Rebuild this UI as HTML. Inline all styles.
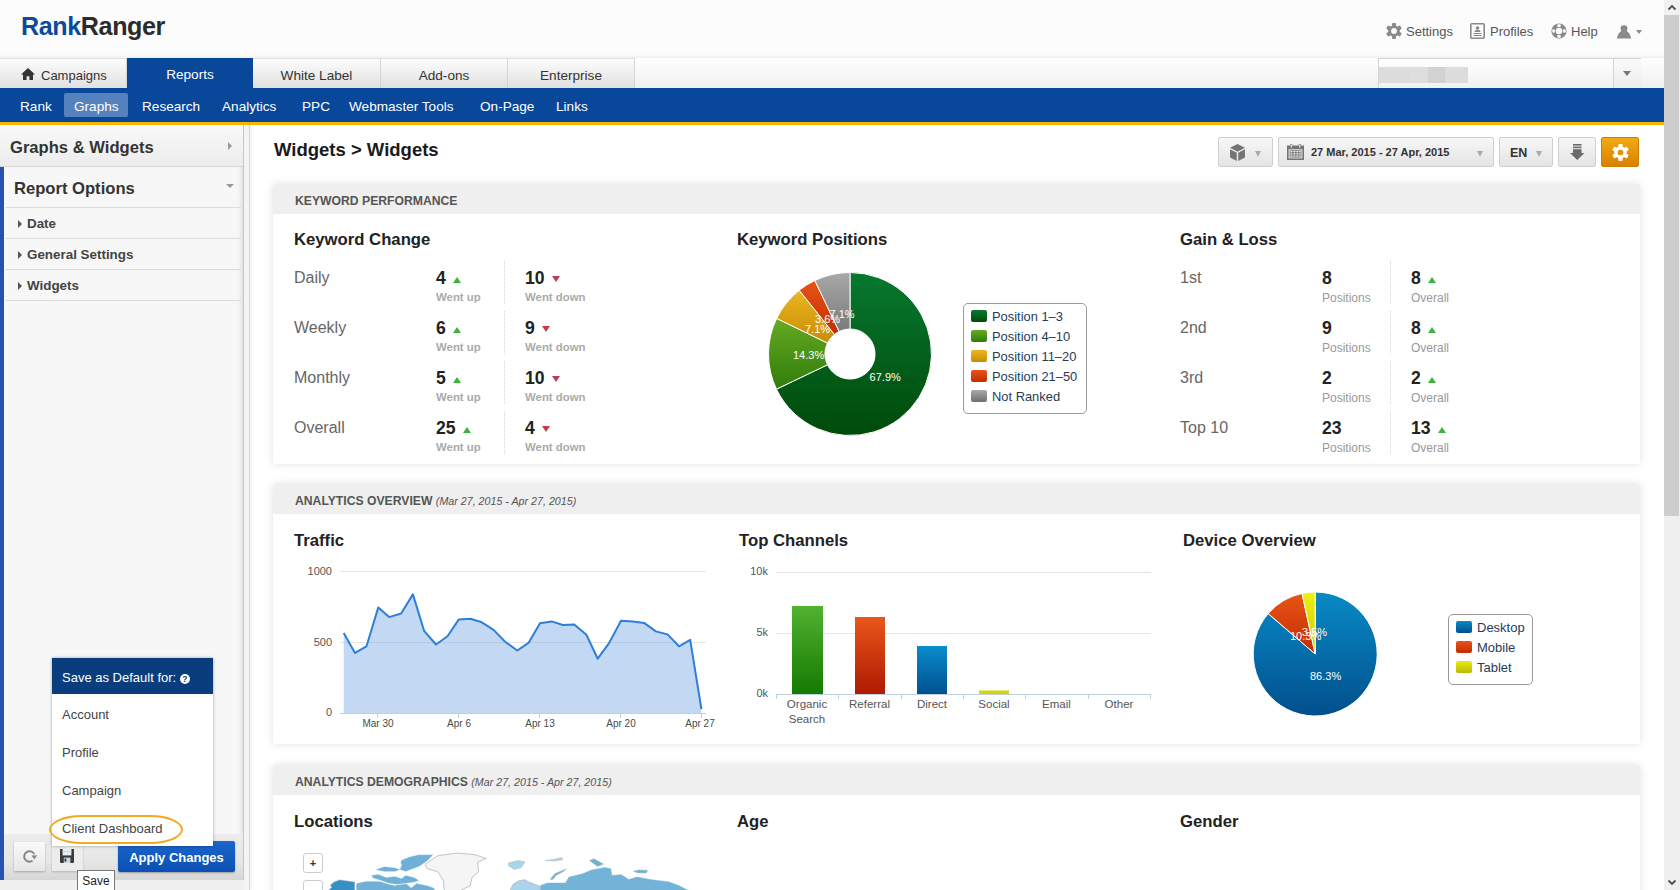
<!DOCTYPE html>
<html><head><meta charset="utf-8">
<style>
*{box-sizing:border-box;margin:0;padding:0}
html,body{width:1680px;height:890px;overflow:hidden;background:#fff;font-family:"Liberation Sans",sans-serif;color:#333}
.abs{position:absolute}
#hdr{position:absolute;left:0;top:0;width:1664px;height:58px;background:#fcfcfc}
#logo{position:absolute;left:21px;top:12px;font-size:25px;font-weight:bold;letter-spacing:-0.4px;transform:scaleX(1.005);transform-origin:0 0}
#logo .a{color:#0b4a9c}#logo .b{color:#2b2b2b}
.tl{position:absolute;top:24px;font-size:13px;color:#555}
#tabs{position:absolute;left:0;top:58px;width:1664px;height:30px;background:linear-gradient(#fff,#f0f0f0);box-shadow:0 -1px 3px rgba(0,0,0,.08)}
.tab{position:absolute;top:0;height:30px;line-height:33px;text-align:center;font-size:13.6px;color:#333;border-right:1px solid #d4d4d4;border-top:1px solid #e2e2e2;background:linear-gradient(#fdfdfd,#e0e0e0)}
.tab.act{background:#08479a;color:#fff;border-right:none}
#nav{position:absolute;left:0;top:88px;width:1664px;height:34px;background:#08479a}
#nav span{position:absolute;top:0;line-height:38px;font-size:13.6px;color:#fff}
#orl{position:absolute;left:0;top:122px;width:1664px;height:3px;background:#f7b500}
#side{position:absolute;left:0;top:125px;width:244px;height:755px;border-bottom-left-radius:4px;background:#f7f7f7;border-right:1px solid #c6c6c6;box-shadow:inset -5px 0 4px -3px rgba(0,0,0,.10)}
#strip{position:absolute;left:244px;top:125px;width:6px;height:765px;background:#f4f4f4;border-right:1px solid #d6d6d6;box-shadow:2px 0 3px rgba(0,0,0,.05)}
#scroll{position:absolute;left:1664px;top:0;width:16px;height:890px;background:#f0f0f0}
#thumb{position:absolute;left:1664px;top:15px;width:15px;height:501px;background:#cdcdcd}
.card{position:absolute;left:273px;width:1367px;background:#fff;box-shadow:0 0 8px rgba(0,0,0,.12);border-radius:3px 3px 0 0}
.card .ch{height:30px;background:#efefef;font-size:12.2px;color:#555;font-weight:bold;line-height:34px;padding-left:22px;border-radius:3px 3px 0 0}
.card .ch i{font-weight:normal;font-size:10.7px}
.si{position:absolute;left:27px;font-size:13.4px;font-weight:bold;color:#444;margin-top:1px}
.si:before{content:"";position:absolute;left:-9px;top:4px;border-top:4px solid transparent;border-bottom:4px solid transparent;border-left:4px solid #555}
.pi{position:absolute;left:10px;font-size:13px;color:#444;margin-top:1px}
.tb{position:absolute;top:137px;height:30px;background:linear-gradient(#f7f7f7,#e4e4e4);border:1px solid #cfcfcf;border-radius:2px}
.car{position:absolute;top:13px;width:0;height:0;border-left:3.5px solid transparent;border-right:3.5px solid transparent;border-top:6px solid #aaa}
.rl{position:absolute;font-size:16px;color:#666;margin-top:1px}
.rn{position:absolute;font-size:17.6px;font-weight:bold;color:#222;white-space:nowrap;margin-top:-0.5px}
.rs{position:absolute;font-size:11.4px;font-weight:bold;color:#aaa;white-space:nowrap;margin-top:4px}
.rs.n{font-weight:normal;font-size:12px;color:#999}
.tu{display:inline-block;margin-left:7px;vertical-align:1px;border-left:4px solid transparent;border-right:4px solid transparent;border-bottom:6.5px solid #3cb43c}
.td{display:inline-block;margin-left:7.5px;vertical-align:2px;border-left:4px solid transparent;border-right:4px solid transparent;border-top:6px solid #c23a55}
.sep{position:absolute;width:0;height:43px;margin-top:3px;border-left:1px dotted #d5d5d5}
.lg{position:absolute;width:16px;height:12px;border-radius:2px}
.lt{position:absolute;font-size:12.9px;color:#283c55;white-space:nowrap;margin-top:1px}
.h3{position:absolute;font-size:16.7px;font-weight:bold;color:#222;white-space:nowrap}
</style></head><body>
<div id="hdr">
  <div id="logo"><span class="a">Rank</span><span class="b">Ranger</span></div>
  <svg class="abs" style="left:1386px;top:23px" width="16" height="16" viewBox="0 0 16 16"><g fill="#8a8a8a"><circle cx="8" cy="8" r="5.8"/><g id="tth"><rect x="6" y="0" width="4" height="3.5" rx="1"/><rect x="6" y="12.5" width="4" height="3.5" rx="1"/></g><use href="#tth" transform="rotate(60 8 8)"/><use href="#tth" transform="rotate(120 8 8)"/></g><circle cx="8" cy="8" r="2.9" fill="#fcfcfc"/></svg>
  <div class="tl" style="left:1406px">Settings</div>
  <svg class="abs" style="left:1470px;top:23px" width="15" height="16" viewBox="0 0 15 16"><rect x="0.8" y="0.8" width="13.4" height="14.4" rx="1" fill="none" stroke="#8a8a8a" stroke-width="1.6"/><circle cx="7.5" cy="5" r="1.8" fill="#8a8a8a"/><path d="M4.5 9c0-1.5 1.3-2.2 3-2.2s3 .7 3 2.2z" fill="#8a8a8a"/><rect x="3.5" y="10" width="8" height="1" fill="#8a8a8a"/><rect x="3.5" y="12" width="8" height="1" fill="#8a8a8a"/></svg>
  <div class="tl" style="left:1490px">Profiles</div>
  <svg class="abs" style="left:1551px;top:23px" width="16" height="16" viewBox="0 0 16 16"><circle cx="8" cy="8" r="7.6" fill="#8a8a8a"/><circle cx="8" cy="8" r="3.3" fill="#fcfcfc"/><g fill="#fcfcfc"><rect x="6.2" y="1.3" width="3.6" height="2.6" rx="1"/><rect x="6.2" y="12.1" width="3.6" height="2.6" rx="1"/><rect x="1.3" y="6.2" width="2.6" height="3.6" rx="1"/><rect x="12.1" y="6.2" width="2.6" height="3.6" rx="1"/></g></svg>
  <div class="tl" style="left:1571px">Help</div>
  <svg class="abs" style="left:1617px;top:25px" width="26" height="14" viewBox="0 0 26 14"><circle cx="7" cy="3.6" r="3.4" fill="#8a8a8a"/><path d="M7 5.5c-3.5 0-6.5 3-7 8h14c-.5-5-3.5-8-7-8z" fill="#8a8a8a"/><path d="M19 5h6l-3 4z" fill="#8a8a8a"/></svg>
</div>
<div id="tabs">
  <div class="tab" style="left:0;width:127px;text-align:left;padding-left:41px;font-size:13px"><svg style="position:absolute;left:21px;top:9px" width="14" height="12" viewBox="0 0 14 12"><path d="M7 0L0 6.5h2V12h3.6V8.3h2.8V12H12V6.5h2z" fill="#333"/></svg>Campaigns</div>
  <div class="tab act" style="left:127px;width:126px;border-top:none">Reports</div>
  <div class="tab" style="left:253px;width:128px">White Label</div>
  <div class="tab" style="left:381px;width:127px">Add-ons</div>
  <div class="tab" style="left:508px;width:127px">Enterprise</div>
  <div class="abs" style="left:1378px;top:0;width:263px;height:30px;background:linear-gradient(#fff,#f1f1f1);border:1px solid #d4d4d4;border-bottom:none">
    <div class="abs" style="left:0;top:8px;width:89px;height:16px;background:linear-gradient(90deg,#dcdcdc 0,#dcdcdc 35%,#dedede 35%,#dedede 55%,#d2d2d2 55%,#d2d2d2 74%,#dcdcdc 74%)"></div>
    <div class="abs" style="left:234px;top:0;width:28px;height:30px;border-left:1px solid #d4d4d4;background:linear-gradient(#fafafa,#ececec)"><div class="abs" style="left:9px;top:12px;width:0;height:0;border-left:4.5px solid transparent;border-right:4.5px solid transparent;border-top:5px solid #777"></div></div>
  </div>
</div>
<div id="nav">
  <div class="abs" style="left:64px;top:5px;width:64px;height:24px;background:#5582bd;border-radius:2px"></div>
  <span style="left:20px">Rank</span>
  <span style="left:74px">Graphs</span>
  <span style="left:142px">Research</span>
  <span style="left:222px">Analytics</span>
  <span style="left:302px">PPC</span>
  <span style="left:349px">Webmaster Tools</span>
  <span style="left:480px">On-Page</span>
  <span style="left:556px">Links</span>
</div>
<div id="orl"></div>
<div id="side">
  <div class="abs" style="left:0;top:0;width:243px;height:42px;background:linear-gradient(#f9f9f9,#ececec);border-bottom:1px solid #d6d6d6"></div>
  <div class="abs" style="left:10px;top:12.5px;font-size:16.6px;font-weight:bold;color:#333">Graphs &amp; Widgets</div>
  <div class="abs" style="left:228px;top:17px;width:0;height:0;border-top:4px solid transparent;border-bottom:4px solid transparent;border-left:4.5px solid #999"></div>
  <div class="abs" style="left:0;top:42px;width:4px;height:713px;background:#2852b0"></div>
  <div class="abs" style="left:14px;top:53.5px;font-size:16.6px;font-weight:bold;color:#333">Report Options</div>
  <div class="abs" style="left:226px;top:59px;width:0;height:0;border-left:4px solid transparent;border-right:4px solid transparent;border-top:4.5px solid #999"></div>
  <div class="abs" style="left:6px;top:82px;width:235px;height:1px;background:#dcdcdc"></div>
  <div class="abs" style="left:6px;top:113px;width:235px;height:1px;background:#dcdcdc"></div>
  <div class="abs" style="left:6px;top:144px;width:235px;height:1px;background:#dcdcdc"></div>
  <div class="abs" style="left:6px;top:175px;width:235px;height:1px;background:#dcdcdc"></div>
  <div class="si" style="top:90px">Date</div>
  <div class="si" style="top:121px">General Settings</div>
  <div class="si" style="top:152px">Widgets</div>
  <div class="abs" style="left:4px;top:709px;width:239px;height:46px;background:linear-gradient(#ececec,#e6e6e6 60%,#d6d6d6)"></div>
  <div class="abs" style="left:14px;top:717px;width:31px;height:29px;background:linear-gradient(#fafafa,#e6e6e6);box-shadow:0 1px 2px rgba(0,0,0,.25)"><svg class="abs" style="left:8px;top:7px" width="15" height="15" viewBox="0 0 15 15"><path d="M10.54 11.84A5.3 5.3 0 1 1 12.18 5.01" fill="none" stroke="#858585" stroke-width="1.9"/><path d="M9.4 6.4L15 6.2 12.4 10.4z" fill="#858585"/></svg></div>
  <div class="abs" style="left:52px;top:720px;width:31px;height:26px;background:#ececec;box-shadow:0 1px 2px rgba(0,0,0,.2)"><svg class="abs" style="left:8px;top:4px" width="14" height="14" viewBox="0 0 14 14"><path d="M0 0H14V13Q14 14 13 14H1Q0 14 0 13z" fill="#3b3b3b"/><rect x="2.6" y="0" width="8.8" height="6.4" fill="#e6eef6"/><rect x="2.6" y="2" width="8.8" height="1" fill="#c8d4e0"/><rect x="3.8" y="8.6" width="6.6" height="5.4" fill="#d6d6d6"/><rect x="4.6" y="9.6" width="1.6" height="3" fill="#2a2a2a"/></svg></div>
  <div class="abs" style="left:118px;top:716px;width:117px;height:31px;background:linear-gradient(#1b66cc,#0a4fb3);border-radius:2px;box-shadow:0 1px 2px rgba(0,0,0,.3);color:#fff;font-size:13px;font-weight:bold;line-height:33px;text-align:center">Apply Changes</div>
</div>
<div class="abs" style="left:0;top:880px;width:244px;height:10px;background:#f0f0f0"></div>
<div id="strip"></div>
<div class="abs" style="left:52px;top:658px;width:161px;height:188px;background:#fff;box-shadow:0 0 3px rgba(0,0,0,.35)">
  <div class="abs" style="left:0;top:0;width:161px;height:36px;background:#0a3d7e;color:#fff;font-size:13px;line-height:39px;padding-left:10px">Save as Default for: <span style="display:inline-block;width:10px;height:10px;border-radius:50%;background:#fff;color:#0a3d7e;font-size:8.5px;font-weight:bold;line-height:10.5px;text-align:center;vertical-align:0px">?</span></div>
  <div class="pi" style="top:48px">Account</div>
  <div class="pi" style="top:86px">Profile</div>
  <div class="pi" style="top:124px">Campaign</div>
  <div class="pi" style="top:162px">Client Dashboard</div>
</div>
<div class="abs" style="left:49px;top:815px;width:134px;height:29px;border:2.5px solid #f0ab22;border-radius:34px/15px"></div>
<div class="abs" style="left:77px;top:870px;width:38px;height:22px;background:#fff;border:1px solid #777;font-size:12px;color:#222;line-height:21px;text-align:center">Save</div>

<div class="abs" style="left:274px;top:139px;font-size:18.5px;font-weight:bold;color:#1a1a1a">Widgets &gt; Widgets</div>

<div class="card" style="top:184px;height:280px"><div class="ch">KEYWORD PERFORMANCE</div></div>
<div class="card" style="top:484px;height:260px"><div class="ch">ANALYTICS OVERVIEW <i>(Mar 27, 2015 - Apr 27, 2015)</i></div></div>
<div class="card" style="top:765px;height:140px"><div class="ch">ANALYTICS DEMOGRAPHICS <i>(Mar 27, 2015 - Apr 27, 2015)</i></div></div>

<div class="tb" style="left:1218px;width:55px"><svg class="abs" style="left:11px;top:6px" width="15" height="17" viewBox="0 0 14 16"><g fill="#747474"><path d="M7 0L14 3.6 7 7.2 0 3.6z"/><path d="M0 4.9L6.3 8.3V16L0 12.6z"/><path d="M7.7 8.3L14 4.9V12.6L7.7 16z"/></g></svg><i class="car" style="left:36px;top:13px;border-left-width:3.5px;border-right-width:3.5px;border-top-width:6px"></i></div>
<div class="tb" style="left:1278px;width:216px"><svg class="abs" style="left:8px;top:6px" width="17" height="16" viewBox="0 0 17 16"><rect x="0.8" y="2.3" width="15.4" height="12.9" fill="none" stroke="#747474" stroke-width="1.6"/><rect x="0.8" y="2.3" width="15.4" height="3" fill="#747474"/><rect x="3.3" y="0" width="2" height="4.2" fill="#747474"/><rect x="11.7" y="0" width="2" height="4.2" fill="#747474"/><rect x="3.7" y="0.6" width="1.2" height="3" fill="#eee"/><rect x="12.1" y="0.6" width="1.2" height="3" fill="#eee"/><rect x="2.6" y="6.3" width="11.8" height="7.2" fill="#747474"/><g fill="#eee"><rect x="3.4" y="7" width="2" height="1.3"/><rect x="6.4" y="7" width="2" height="1.3"/><rect x="9.4" y="7" width="2" height="1.3"/><rect x="12.2" y="7" width="1.6" height="1.3"/><rect x="3.4" y="9.2" width="2" height="1.3"/><rect x="6.4" y="9.2" width="2" height="1.3"/><rect x="9.4" y="9.2" width="2" height="1.3"/><rect x="12.2" y="9.2" width="1.6" height="1.3"/><rect x="3.4" y="11.4" width="2" height="1.3"/><rect x="6.4" y="11.4" width="2" height="1.3"/><rect x="9.4" y="11.4" width="2" height="1.3"/><rect x="12.2" y="11.4" width="1.6" height="1.3"/></g></svg><span class="abs" style="left:32px;top:8px;font-size:11px;font-weight:bold;color:#333">27 Mar, 2015 - 27 Apr, 2015</span><i class="car" style="left:198px"></i></div>
<div class="tb" style="left:1499px;width:54px"><span class="abs" style="left:10px;top:8px;font-size:12.5px;font-weight:bold;color:#333">EN</span><i class="car" style="left:36px"></i></div>
<div class="tb" style="left:1558px;width:38px"><svg class="abs" style="left:11px;top:6px" width="15" height="17" viewBox="0 0 15 17"><rect x="3" y="0" width="8.5" height="1.6" fill="#6a6a6a"/><rect x="3" y="2.6" width="8.5" height="1.6" fill="#6a6a6a"/><rect x="3" y="5.2" width="8.5" height="3.8" fill="#6a6a6a"/><path d="M0 9h14.5l-7.25 7z" fill="#6a6a6a"/></svg></div>
<div class="abs" style="left:1601px;top:137px;width:38px;height:30px;background:linear-gradient(#f3aa12,#d98100);border:1px solid #d08000;border-radius:2px"><svg class="abs" style="left:10px;top:6px" width="17" height="17" viewBox="0 0 16 16"><g fill="#fff"><circle cx="8" cy="8" r="5.8"/><g id="tth2"><rect x="6" y="0" width="4" height="3.5" rx="1"/><rect x="6" y="12.5" width="4" height="3.5" rx="1"/></g><use href="#tth2" transform="rotate(60 8 8)"/><use href="#tth2" transform="rotate(120 8 8)"/></g><circle cx="8" cy="8" r="2.7" fill="#e39400"/></svg></div>

<div class="h3" style="left:294px;top:230px">Keyword Change</div>
<div class="h3" style="left:737px;top:230px">Keyword Positions</div>
<div class="h3" style="left:1180px;top:230px">Gain &amp; Loss</div>
<div class="rl" style="left:294px;top:268px">Daily</div>
<div class="rn" style="left:436px;top:268px">4<i class="tu"></i></div>
<div class="rs" style="left:436px;top:287px">Went up</div>
<div class="sep" style="left:504px;top:258px"></div>
<div class="rn" style="left:525px;top:268px">10<i class="td"></i></div>
<div class="rs" style="left:525px;top:287px">Went down</div>
<div class="rl" style="left:294px;top:318px">Weekly</div>
<div class="rn" style="left:436px;top:318px">6<i class="tu"></i></div>
<div class="rs" style="left:436px;top:337px">Went up</div>
<div class="sep" style="left:504px;top:308px"></div>
<div class="rn" style="left:525px;top:318px">9<i class="td"></i></div>
<div class="rs" style="left:525px;top:337px">Went down</div>
<div class="rl" style="left:294px;top:368px">Monthly</div>
<div class="rn" style="left:436px;top:368px">5<i class="tu"></i></div>
<div class="rs" style="left:436px;top:387px">Went up</div>
<div class="sep" style="left:504px;top:358px"></div>
<div class="rn" style="left:525px;top:368px">10<i class="td"></i></div>
<div class="rs" style="left:525px;top:387px">Went down</div>
<div class="rl" style="left:294px;top:418px">Overall</div>
<div class="rn" style="left:436px;top:418px">25<i class="tu"></i></div>
<div class="rs" style="left:436px;top:437px">Went up</div>
<div class="sep" style="left:504px;top:408px"></div>
<div class="rn" style="left:525px;top:418px">4<i class="td"></i></div>
<div class="rs" style="left:525px;top:437px">Went down</div>
<div class="rl" style="left:1180px;top:268px">1st</div>
<div class="rn" style="left:1322px;top:268px">8</div>
<div class="rs n" style="left:1322px;top:287px">Positions</div>
<div class="sep" style="left:1390px;top:258px"></div>
<div class="rn" style="left:1411px;top:268px">8<i class="tu"></i></div>
<div class="rs n" style="left:1411px;top:287px">Overall</div>
<div class="rl" style="left:1180px;top:318px">2nd</div>
<div class="rn" style="left:1322px;top:318px">9</div>
<div class="rs n" style="left:1322px;top:337px">Positions</div>
<div class="sep" style="left:1390px;top:308px"></div>
<div class="rn" style="left:1411px;top:318px">8<i class="tu"></i></div>
<div class="rs n" style="left:1411px;top:337px">Overall</div>
<div class="rl" style="left:1180px;top:368px">3rd</div>
<div class="rn" style="left:1322px;top:368px">2</div>
<div class="rs n" style="left:1322px;top:387px">Positions</div>
<div class="sep" style="left:1390px;top:358px"></div>
<div class="rn" style="left:1411px;top:368px">2<i class="tu"></i></div>
<div class="rs n" style="left:1411px;top:387px">Overall</div>
<div class="rl" style="left:1180px;top:418px">Top 10</div>
<div class="rn" style="left:1322px;top:418px">23</div>
<div class="rs n" style="left:1322px;top:437px">Positions</div>
<div class="sep" style="left:1390px;top:408px"></div>
<div class="rn" style="left:1411px;top:418px">13<i class="tu"></i></div>
<div class="rs n" style="left:1411px;top:437px">Overall</div>
<svg class="abs" style="left:760px;top:264px" width="180" height="180" viewBox="0 0 180 180">
<defs>
<linearGradient id="gA" x1="0" y1="0" x2="0" y2="1"><stop offset="0" stop-color="#07782f"/><stop offset="1" stop-color="#004a0a"/></linearGradient>
<linearGradient id="gB" x1="0" y1="0" x2="0" y2="1"><stop offset="0" stop-color="#66aa22"/><stop offset="1" stop-color="#317d0b"/></linearGradient>
<linearGradient id="gC" x1="0" y1="0" x2="0" y2="1"><stop offset="0" stop-color="#ebb624"/><stop offset="1" stop-color="#c98c00"/></linearGradient>
<linearGradient id="gD" x1="0" y1="0" x2="0" y2="1"><stop offset="0" stop-color="#e85515"/><stop offset="1" stop-color="#c22c00"/></linearGradient>
<linearGradient id="gE" x1="0" y1="0" x2="0" y2="1"><stop offset="0" stop-color="#a8a8a8"/><stop offset="1" stop-color="#7a7a7a"/></linearGradient>
</defs><path d="M90.00 8.50A81.5 81.5 0 1 1 16.48 125.16L67.45 100.79A25 25 0 1 0 90.00 65.00Z" fill="url(#gA)" stroke="#fff" stroke-width="1"/><path d="M16.48 125.16A81.5 81.5 0 0 1 16.70 54.38L67.51 79.07A25 25 0 0 0 67.45 100.79Z" fill="url(#gB)" stroke="#fff" stroke-width="1"/><path d="M16.70 54.38A81.5 81.5 0 0 1 39.24 26.24L74.43 70.44A25 25 0 0 0 67.51 79.07Z" fill="url(#gC)" stroke="#fff" stroke-width="1"/><path d="M39.24 26.24A81.5 81.5 0 0 1 54.84 16.48L79.21 67.45A25 25 0 0 0 74.43 70.44Z" fill="url(#gD)" stroke="#fff" stroke-width="1"/><path d="M54.84 16.48A81.5 81.5 0 0 1 90.00 8.50L90.00 65.00A25 25 0 0 0 79.21 67.45Z" fill="url(#gE)" stroke="#fff" stroke-width="1"/>
<g font-family="Liberation Sans" font-size="11" fill="#fff">
<text x="109.6" y="117">67.9%</text><text x="33" y="94.5">14.3%</text><text x="45" y="69">7.1%</text><text x="55" y="59">3.6%</text><text x="69.5" y="53.5">7.1%</text>
</g></svg><div class="abs" style="left:963px;top:303px;width:124px;height:111px;border:1px solid #9a9a9a;border-radius:5px;background:#fff"></div><div class="lg" style="left:971px;top:310px;background:linear-gradient(#07782f,#004a0a)"></div><div class="lt" style="left:992px;top:308px">Position 1–3</div><div class="lg" style="left:971px;top:330px;background:linear-gradient(#66aa22,#317d0b)"></div><div class="lt" style="left:992px;top:328px">Position 4–10</div><div class="lg" style="left:971px;top:350px;background:linear-gradient(#ebb624,#c98c00)"></div><div class="lt" style="left:992px;top:348px">Position 11–20</div><div class="lg" style="left:971px;top:370px;background:linear-gradient(#e85515,#c22c00)"></div><div class="lt" style="left:992px;top:368px">Position 21–50</div><div class="lg" style="left:971px;top:390px;background:linear-gradient(#a8a8a8,#6f6f6f)"></div><div class="lt" style="left:992px;top:388px">Not Ranked</div>
<div class="h3" style="left:294px;top:531px">Traffic</div>
<div class="h3" style="left:739px;top:531px">Top Channels</div>
<div class="h3" style="left:1183px;top:531px">Device Overview</div>
<svg class="abs" style="left:0;top:0;overflow:visible" width="1" height="1">
<line x1="340" y1="571.5" x2="706" y2="571.5" stroke="#e6e6e6"/>
<line x1="340" y1="642.5" x2="706" y2="642.5" stroke="#e6e6e6"/>
<polygon points="343.7,713 343.7,632.9 355.0,652.9 366.5,646.3 378.3,607.4 389.2,617.1 401.1,613.5 412.9,594.4 424.1,630.8 436.0,644.5 447.5,636.3 458.7,619.6 470.5,618.7 481.8,622.3 493.6,629.9 505.1,641.7 517.3,650.5 528.5,642.9 540.0,623.2 551.6,621.4 562.8,625.0 574.3,624.4 586.4,634.7 597.7,658.7 609.2,642.9 621.0,620.8 632.6,621.4 644.1,622.9 655.9,631.4 667.5,634.4 679.0,646.3 690.2,639.9 701.4,709.1 701.4,713" fill="#7aaae4" fill-opacity="0.45"/>
<polyline points="343.7,632.9 355.0,652.9 366.5,646.3 378.3,607.4 389.2,617.1 401.1,613.5 412.9,594.4 424.1,630.8 436.0,644.5 447.5,636.3 458.7,619.6 470.5,618.7 481.8,622.3 493.6,629.9 505.1,641.7 517.3,650.5 528.5,642.9 540.0,623.2 551.6,621.4 562.8,625.0 574.3,624.4 586.4,634.7 597.7,658.7 609.2,642.9 621.0,620.8 632.6,621.4 644.1,622.9 655.9,631.4 667.5,634.4 679.0,646.3 690.2,639.9 701.4,709.1" fill="none" stroke="#2f7ed8" stroke-width="2" stroke-linejoin="round"/>
<line x1="340" y1="713.5" x2="706" y2="713.5" stroke="#c0d0e0"/>
<line x1="377.5" y1="713" x2="377.5" y2="718" stroke="#c0d0e0"/><line x1="458.5" y1="713" x2="458.5" y2="718" stroke="#c0d0e0"/><line x1="539.5" y1="713" x2="539.5" y2="718" stroke="#c0d0e0"/><line x1="620.5" y1="713" x2="620.5" y2="718" stroke="#c0d0e0"/><line x1="701.5" y1="713" x2="701.5" y2="718" stroke="#c0d0e0"/>
<g font-family="Liberation Sans" font-size="11" fill="#555" text-anchor="end"><text x="332" y="575">1000</text><text x="332" y="646">500</text><text x="332" y="716">0</text></g>
<g font-family="Liberation Sans" font-size="10" fill="#4a4a4a" text-anchor="middle"><text x="378" y="727">Mar 30</text><text x="459" y="727">Apr 6</text><text x="540" y="727">Apr 13</text><text x="621" y="727">Apr 20</text><text x="700" y="727">Apr 27</text></g>
</svg><svg class="abs" style="left:0;top:0;overflow:visible" width="1" height="1">
<defs>
<linearGradient id="bA" x1="0" y1="0" x2="0" y2="1"><stop offset="0" stop-color="#52b232"/><stop offset="1" stop-color="#137a00"/></linearGradient>
<linearGradient id="bB" x1="0" y1="0" x2="0" y2="1"><stop offset="0" stop-color="#ea561c"/><stop offset="1" stop-color="#ad1a00"/></linearGradient>
<linearGradient id="bC" x1="0" y1="0" x2="0" y2="1"><stop offset="0" stop-color="#0a8ccc"/><stop offset="1" stop-color="#00508f"/></linearGradient>
</defs>
<line x1="776" y1="572.5" x2="1151" y2="572.5" stroke="#e6e6e6"/>
<line x1="776" y1="633.5" x2="1151" y2="633.5" stroke="#e6e6e6"/>
<rect x="792" y="606" width="31" height="88" fill="url(#bA)"/>
<rect x="855" y="617" width="30" height="77" fill="url(#bB)"/>
<rect x="917" y="646" width="30" height="48" fill="url(#bC)"/>
<rect x="979" y="690.5" width="30" height="3.5" fill="#d4d800"/>
<line x1="776" y1="694.5" x2="1151" y2="694.5" stroke="#c0d0e0"/>
<line x1="776.5" y1="694" x2="776.5" y2="699" stroke="#c0d0e0"/><line x1="838.5" y1="694" x2="838.5" y2="699" stroke="#c0d0e0"/><line x1="901.5" y1="694" x2="901.5" y2="699" stroke="#c0d0e0"/><line x1="963.5" y1="694" x2="963.5" y2="699" stroke="#c0d0e0"/><line x1="1025.5" y1="694" x2="1025.5" y2="699" stroke="#c0d0e0"/><line x1="1088.5" y1="694" x2="1088.5" y2="699" stroke="#c0d0e0"/><line x1="1150.5" y1="694" x2="1150.5" y2="699" stroke="#c0d0e0"/>
<g font-family="Liberation Sans" font-size="11" fill="#555" text-anchor="end"><text x="768" y="575">10k</text><text x="768" y="636">5k</text><text x="768" y="697">0k</text></g>
<g font-family="Liberation Sans" font-size="11.5" fill="#555" text-anchor="middle"><text x="807" y="708">Organic</text><text x="807" y="723">Search</text><text x="869.5" y="708">Referral</text><text x="932" y="708">Direct</text><text x="994" y="708">Social</text><text x="1056.5" y="708">Email</text><text x="1119" y="708">Other</text></g>
</svg><svg class="abs" style="left:1245px;top:584px" width="140" height="140" viewBox="0 0 140 140">
<defs>
<linearGradient id="dA" x1="0" y1="0" x2="0" y2="1"><stop offset="0" stop-color="#0a8ac6"/><stop offset="1" stop-color="#004f8c"/></linearGradient>
<linearGradient id="dB" x1="0" y1="0" x2="0" y2="1"><stop offset="0" stop-color="#e85515"/><stop offset="1" stop-color="#c22c00"/></linearGradient>
<linearGradient id="dC" x1="0" y1="0" x2="0" y2="1"><stop offset="0" stop-color="#f0f010"/><stop offset="1" stop-color="#c8c800"/></linearGradient>
</defs><path d="M70.2 70L70.20 8.00A62 62 0 1 1 23.18 29.59Z" fill="url(#dA)" stroke="#fff" stroke-width="1"/><path d="M70.2 70L23.18 29.59A62 62 0 0 1 57.06 9.41Z" fill="url(#dB)" stroke="#fff" stroke-width="1"/><path d="M70.2 70L57.06 9.41A62 62 0 0 1 70.20 8.00Z" fill="url(#dC)" stroke="#fff" stroke-width="1"/>
<g font-family="Liberation Sans" font-size="11" fill="#fff">
<text x="65" y="96">86.3%</text><text x="45" y="56">10.3%</text><text x="57" y="52">3.5%</text>
</g></svg><div class="abs" style="left:1448px;top:614px;width:85px;height:71px;border:1px solid #9a9a9a;border-radius:5px;background:#fff"></div><div class="lg" style="left:1456px;top:621px;background:linear-gradient(#0a8ac6,#004f8c)"></div><div class="lt" style="left:1477px;top:619px;font-size:13px;color:#283c55">Desktop</div><div class="lg" style="left:1456px;top:641px;background:linear-gradient(#e85515,#c22c00)"></div><div class="lt" style="left:1477px;top:639px;font-size:13px;color:#283c55">Mobile</div><div class="lg" style="left:1456px;top:661px;background:linear-gradient(#eaea10,#b8b800)"></div><div class="lt" style="left:1477px;top:659px;font-size:13px;color:#283c55">Tablet</div>
<div class="h3" style="left:294px;top:812px">Locations</div>
<div class="h3" style="left:737px;top:812px">Age</div>
<div class="h3" style="left:1180px;top:812px">Gender</div>
<svg class="abs" style="left:0;top:0;overflow:visible" width="1" height="1"><polygon points="330.2,885.2 333.9,882.0 339.8,879.8 354.8,882.0 354.8,891.1 327.5,891.1 331.8,887.3" fill="#3591c4" stroke="#c8c8c8" stroke-width="0.5"/><polygon points="356.4,883.6 366.1,881.4 380.0,881.4 386.5,883.6 395.0,885.7 403.6,881.4 411.1,887.9 416.5,883.6 427.2,885.7 433.6,887.9 435.8,891.1 356.4,891.1" fill="#6fb1d6" stroke="#c8c8c8" stroke-width="0.5"/><polygon points="371.4,875.0 377.9,873.9 386.5,877.2 395.0,876.1 401.5,878.2 405.7,875.0 414.3,877.2 419.7,880.4 414.3,882.5 405.7,883.6 397.2,884.7 388.6,883.6 380.0,880.4 372.5,878.2" fill="#6fb1d6" stroke="#fff" stroke-width="0.8"/><polygon points="401.5,860.0 409.0,856.8 418.6,854.6 433.6,854.6 427.2,861.1 419.7,866.4 411.1,869.7 405.7,871.8 399.3,869.7 401.5,865.4 400.4,862.1" fill="#6fb1d6" stroke="#fff" stroke-width="0.6"/><polygon points="374.7,869.7 384.3,866.4 395.0,867.5 400.4,869.7 395.0,871.8 384.3,871.8" fill="#6fb1d6" stroke="#fff" stroke-width="0.6"/><polygon points="425.0,864.3 437.9,855.7 457.2,853.0 474.3,854.6 486.1,858.4 477.6,862.1 478.6,871.8 472.2,877.2 470.1,885.7 459.3,891.1 444.3,891.1 443.3,880.4 437.9,871.8 427.2,868.6" fill="#f5f5f5" stroke="#b5b5b5" stroke-width="0.8"/><polygon points="508.3,862.9 517.9,860.5 525.0,861.7 521.4,867.6 514.3,869.4 508.3,865.8" fill="#a8d4ec" stroke="#bbb" stroke-width="0.5"/><polygon points="545.2,860.5 553.6,859.3 561.9,857.5 562.5,859.9 553.6,861.1" fill="#a8d4ec" stroke="#bbb" stroke-width="0.5"/><polygon points="550.0,879.5 554.8,873.6 566.7,868.8 563.1,871.8 556.0,875.4 553.0,879.5" fill="#6fb1d6" stroke="#bbb" stroke-width="0.5"/><polygon points="589.3,860.5 594.0,858.7 603.6,864.0 597.6,866.4" fill="#6fb1d6" stroke="#bbb" stroke-width="0.5"/><polygon points="633.3,871.2 638.1,870.0 647.6,870.2 646.4,873.0 638.1,873.0" fill="#6fb1d6" stroke="#bbb" stroke-width="0.5"/><polygon points="540.5,885.5 547.6,883.1 557.1,883.1 565.5,883.1 569.0,877.1 573.8,876.0 583.3,873.6 591.7,870.0 604.8,867.6 610.7,868.8 611.9,875.4 621.4,874.8 628.6,879.5 636.9,877.1 650.0,879.5 659.5,880.7 669.0,881.9 678.6,885.5 690.5,891.4 540.5,891.4" fill="#73b3d8" stroke="#73b3d8" stroke-width="0.5"/><polygon points="509.5,891.4 513.1,884.3 519.0,880.7 525.0,879.8 528.6,881.9 539.3,886.1 540.5,891.4" fill="#a8d4ec" stroke="#b8b8b8" stroke-width="0.8"/></svg>
<div class="abs" style="left:303px;top:853px;width:20px;height:20px;border:1px solid #ccc;border-radius:3px;background:#fff;font-size:11px;font-weight:bold;text-align:center;line-height:18px;color:#333">+</div>
<div class="abs" style="left:303px;top:880px;width:20px;height:20px;border:1px solid #ccc;border-radius:3px;background:#fff"></div>
<div id="scroll"></div><div id="thumb"></div><svg class="abs" style="left:1664px;top:0" width="16" height="15" viewBox="0 0 16 15"><path d="M4.5 9.5L8 6l3.5 3.5" fill="none" stroke="#505050" stroke-width="1.8"/></svg><svg class="abs" style="left:1664px;top:875px" width="16" height="15" viewBox="0 0 16 15"><path d="M4.5 5.5L8 9l3.5-3.5" fill="none" stroke="#505050" stroke-width="1.8"/></svg>
</body></html>
